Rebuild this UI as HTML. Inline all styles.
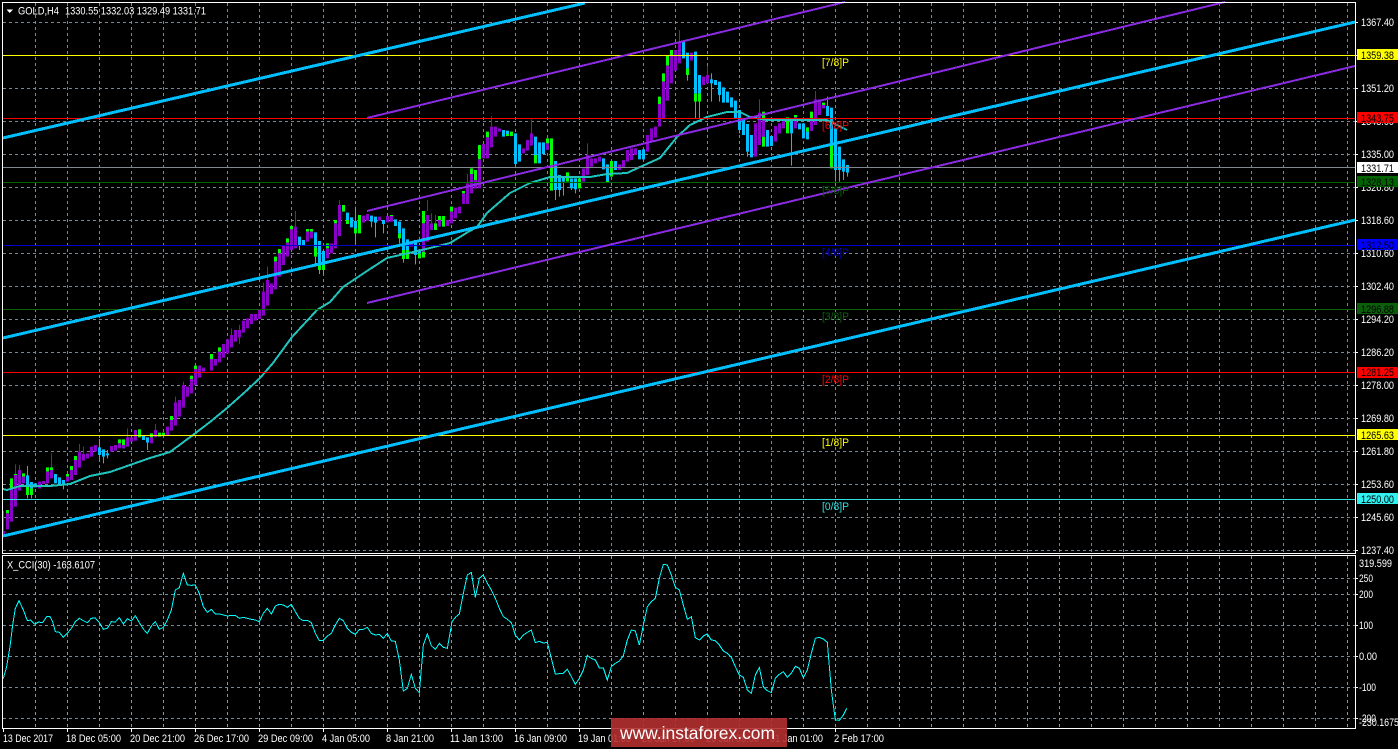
<!DOCTYPE html>
<html>
<head>
<meta charset="utf-8">
<title>GOLD,H4</title>
<style>
html,body{margin:0;padding:0;background:#000;width:1398px;height:749px;overflow:hidden}
svg{display:block}
text{font-family:"Liberation Sans",sans-serif;font-size:11px;fill:#fff}
.k{fill:#000}
</style>
</head>
<body>
<svg width="1398" height="749" viewBox="0 0 1398 749" xmlns="http://www.w3.org/2000/svg">
<rect width="1398" height="749" fill="#000"/>
<g shape-rendering="crispEdges">
<!-- grid -->
<path fill="none" stroke="#778899" stroke-width="1" stroke-dasharray="3 3" d="M3 22.5H1355M3 55.5H1355M3 88.5H1355M3 121.5H1355M3 154.5H1355M3 187.5H1355M3 220.5H1355M3 253.5H1355M3 286.5H1355M3 319.5H1355M3 352.5H1355M3 385.5H1355M3 418.5H1355M3 451.5H1355M3 484.5H1355M3 517.5H1355M3 550.5H1355M3 578.5H1355M3 594.5H1355M3 625.5H1355M3 656.5H1355M3 687.5H1355M3 718.5H1355"/>
<path fill="none" stroke="#778899" stroke-width="1" stroke-dasharray="3 3" d="M35.5 3V553M67.5 3V553M99.5 3V553M131.5 3V553M163.5 3V553M195.5 3V553M227.5 3V553M259.5 3V553M291.5 3V553M323.5 3V553M355.5 3V553M387.5 3V553M419.5 3V553M451.5 3V553M483.5 3V553M515.5 3V553M547.5 3V553M579.5 3V553M611.5 3V553M643.5 3V553M675.5 3V553M707.5 3V553M739.5 3V553M771.5 3V553M803.5 3V553M835.5 3V553M867.5 3V553M899.5 3V553M931.5 3V553M963.5 3V553M995.5 3V553M1027.5 3V553M1059.5 3V553M1091.5 3V553M1123.5 3V553M1155.5 3V553M1187.5 3V553M1219.5 3V553M1251.5 3V553M1283.5 3V553M1315.5 3V553M1347.5 3V553"/>
<path fill="none" stroke="#8c96a0" stroke-width="1" stroke-dasharray="3 3" d="M35.5 556V728M67.5 556V728M99.5 556V728M131.5 556V728M163.5 556V728M195.5 556V728M227.5 556V728M259.5 556V728M291.5 556V728M323.5 556V728M355.5 556V728M387.5 556V728M419.5 556V728M451.5 556V728M483.5 556V728M515.5 556V728M547.5 556V728M579.5 556V728M611.5 556V728M643.5 556V728M675.5 556V728M707.5 556V728M739.5 556V728M771.5 556V728M803.5 556V728M835.5 556V728M867.5 556V728M899.5 556V728M931.5 556V728M963.5 556V728M995.5 556V728M1027.5 556V728M1059.5 556V728M1091.5 556V728M1123.5 556V728M1155.5 556V728M1187.5 556V728M1219.5 556V728M1251.5 556V728M1283.5 556V728M1315.5 556V728M1347.5 556V728"/>

<!-- candles part 1 -->
<g transform="translate(0 200) scale(.3333333333)" fill="none" shape-rendering="geometricPrecision">
<path stroke="#9400D3" stroke-width="3" d="M10.5 933V1005M46.5 793V825M58.5 795V810M154.5 760V810M238.5 732V755M250.5 740V762M382.5 685V712M466.5 672V690M526.5 590V607M550.5 545V555M694.5 385V405M718.5 375V432M790.5 248V275M802.5 200V240M886.5 33V80M1018.5 0V15M1282.5 0V33M1294.5 40V70M1306.5 45V70"/>
<path stroke="#00BFFF" stroke-width="3" d="M82.5 798V895M94.5 880V895M190.5 855V868M298.5 717V780M310.5 770V790M322.5 750V775M442.5 728V750M898.5 135V150M946.5 170V200M958.5 190V222M970.5 210V225M1066.5 20V132M1114.5 65V82M1126.5 68V112M1150.5 72V100M1198.5 115V130M1210.5 177V188M1246.5 165V193"/>
<path stroke="#00FF00" stroke-width="9" d="M22.5 930V940M34.5 835V868M46.5 822V825M70.5 820V830M82.5 860V885M94.5 865V885M142.5 802V815M154.5 802V810M202.5 822V830M214.5 798V810M226.5 768V780M358.5 718V730M370.5 718V745M418.5 688V712M454.5 700V712M478.5 698V710M490.5 698V708M514.5 648V660M574.5 527V537M586.5 497V507M634.5 462V477M658.5 442V455M826.5 170V185M838.5 147V160M862.5 115V128M874.5 78V88M922.5 87V95M934.5 87V95M946.5 143V170M958.5 190V210M970.5 195V210M982.5 130V145M1006.5 60V70M1030.5 15V35M1042.5 60V72M1066.5 85V100M1078.5 45V100M1174.5 45V48M1198.5 100V115M1210.5 150V177M1222.5 150V177M1258.5 160V175M1270.5 33V70M1270.5 155V173M1306.5 70V90M1318.5 48V60M1330.5 48V80"/>
<path stroke="#8A00C8" stroke-width="9" d="M10.5 993V1005M22.5 940V988M34.5 868V965M46.5 825V920M58.5 810V872M70.5 830V850M118.5 845V865M130.5 843V852M142.5 815V850M154.5 810V835M202.5 830V845M214.5 810V840M226.5 780V825M238.5 755V803M250.5 762V782M262.5 760V775M274.5 740V770M286.5 735V755M334.5 738V755M346.5 735V752M358.5 730V745M370.5 735V745M382.5 712V740M394.5 712V725M406.5 690V722M454.5 712V730M466.5 690V712M502.5 680V705M514.5 660V692M526.5 607V677M538.5 600V650M550.5 555V623M562.5 560V590M574.5 537V580M586.5 507V555M598.5 497V533M610.5 503V515M634.5 477V512M646.5 477V497M658.5 455V487M670.5 432V473M682.5 418V460M694.5 405V442M706.5 390V425M718.5 390V412M730.5 362V398M742.5 355V385M754.5 342V372M766.5 342V362M778.5 330V357M790.5 275V347M802.5 240V317M814.5 250V282M826.5 185V268M838.5 160V230M850.5 138V195M862.5 128V170M874.5 88V150M886.5 80V145M922.5 95V125M934.5 95V115M982.5 145V175M994.5 130V160M1006.5 70V145M1018.5 15V108M1090.5 47V68M1102.5 42V62M1138.5 50V62M1162.5 48V67M1174.5 48V65M1234.5 125V140M1270.5 70V155M1282.5 45V125M1294.5 70V90M1318.5 60V80M1342.5 60V78"/>
<path stroke="#00BFFF" stroke-width="9" d="M82.5 826V860M94.5 846V865M106.5 850V862M166.5 822V850M178.5 832V855M190.5 840V855M298.5 742V765M310.5 748V770M322.5 760V766M430.5 708V720M442.5 712V728M898.5 110V135M910.5 120V137M946.5 97V143M958.5 123V190M970.5 153V195M1042.5 38V60M1054.5 52V82M1066.5 63V85M1114.5 47V65M1126.5 50V68M1150.5 60V72M1186.5 58V78M1198.5 65V100M1210.5 85V150M1222.5 118V150M1246.5 120V165M1258.5 150V160"/>
</g>

<!-- candles part 2 -->
<g transform="translate(450 30) scale(.3333333333)" fill="none" shape-rendering="geometricPrecision">
<path stroke="#9400D3" stroke-width="3" d="M52.5 432V460M124.5 258V290M244.5 268V310M412.5 340V375M688.5 0V35M772.5 108V135M928.5 208V248M1096.5 183V208M640.5 130V155"/>
<path stroke="#00BFFF" stroke-width="3" d="M196.5 402V410M316.5 480V510M328.5 480V500M340.5 455V497M364.5 475V480M376.5 478V490M712.5 135V152M736.5 215V265M748.5 215V265M784.5 130V215M808.5 195V215M868.5 300V310M892.5 365V380M1024.5 310V407M1132.5 200V228M1156.5 420V455M1168.5 420V455M1180.5 425V450M1192.5 428V440"/>
<path stroke="#00FF00" stroke-width="9" d="M4.5 530V545M40.5 483V490M64.5 415V432M76.5 420V450M88.5 345V388M112.5 305V322M172.5 312V318M184.5 305V318M256.5 375V400M292.5 325V340M304.5 325V482M352.5 427V455M388.5 445V475M472.5 453V456M484.5 393V440M628.5 200V222M640.5 130V155M652.5 77V107M664.5 60V75M712.5 115V135M736.5 190V215M748.5 190V215M940.5 245V270M940.5 320V350M1012.5 262V310M1036.5 255V262M1072.5 292V305M1084.5 245V265M1120.5 218V225M1144.5 345V415"/>
<path stroke="#8A00C8" stroke-width="9" d="M4.5 545V580M16.5 533V565M28.5 530V550M40.5 490V522M52.5 460V522M64.5 432V490M76.5 450V476M88.5 388V475M100.5 342V385M112.5 322V385M124.5 290V352M136.5 290V320M148.5 295V305M220.5 355V370M232.5 330V362M244.5 310V347M292.5 340V360M400.5 415V455M412.5 375V435M424.5 385V410M436.5 385V400M448.5 380V395M508.5 403V420M520.5 390V412M532.5 360V395M544.5 355V390M556.5 355V375M592.5 315V365M604.5 295V335M616.5 290V323M628.5 222V290M640.5 155V265M652.5 107V212M664.5 75V160M676.5 60V122M688.5 35V100M724.5 68V92M760.5 140V165M772.5 135V160M916.5 280V380M928.5 248V345M940.5 270V320M976.5 288V335M988.5 280V310M1000.5 265V295M1036.5 262V295M1084.5 265V303M1096.5 208V285M1108.5 208V255M1120.5 225V235"/>
<path stroke="#00BFFF" stroke-width="9" d="M160.5 300V320M172.5 302V312M196.5 310V402M208.5 343V395M256.5 320V375M268.5 337V400M280.5 337V372M316.5 393V480M328.5 435V480M340.5 440V455M364.5 445V475M376.5 445V478M460.5 385V418M472.5 403V453M496.5 393V420M568.5 360V388M580.5 358V388M700.5 35V85M712.5 68V115M736.5 65V190M748.5 135V190M784.5 148V160M796.5 150V165M808.5 155V195M820.5 172V218M832.5 185V218M844.5 202V232M856.5 212V265M868.5 240V300M880.5 268V315M892.5 282V365M904.5 315V382M952.5 300V350M964.5 318V348M1024.5 265V310M1048.5 280V298M1060.5 280V325M1072.5 305V328M1132.5 228V258M1144.5 233V345M1156.5 295V420M1168.5 350V420M1180.5 388V425M1192.5 405V428"/>
</g>

<!-- moving average -->
<polyline fill="none" stroke="#20C4BC" stroke-width="2" points="3,489 7,490 20,486 35,486 50,486 70,484 75,482 90,476 110,472 130,465 150,458 170,452 193,435 210,422 227,408 245,392 260,378 273,363 292,337 305,323 317,310 330,302 343,287 355,279 367,271 387,258 413,252 430,248 450,243 468,232 477,227 487,213 510,193 530,183 550,177 590,177 607,174 627,173 640,167 660,158 677,137 690,125 707,117 727,112 740,112 750,117 767,120 827,120 847,130"/>

<!-- level lines -->
<path fill="none" stroke="#FFFF00" d="M3 55.5H1355M3 435.5H1355"/>
<path fill="none" stroke="#FF0000" d="M3 118.5H1355M3 372.5H1355"/>
<path fill="none" stroke="#7f8890" d="M3 167.5H1355"/>
<path fill="none" stroke="#006400" d="M3 182.5H1355"/>
<path fill="none" stroke="#0000CD" d="M3 245.5H1355"/>
<path fill="none" stroke="#0B5F0B" d="M3 309.5H1355"/>
<path fill="none" stroke="#30E0E0" d="M3 499.5H1355"/>

<!-- channels -->
<path fill="none" stroke="#8A2BE2" stroke-width="2" d="M367 118L845 2M367 211L1225 2M367 303L1355 66"/>
<path fill="none" stroke="#00BFFF" stroke-width="3" d="M3 138L585 3M3 338L1355 22M3 536L1355 220"/>
</g>

<!-- murray labels -->
<text x="822" y="66" textLength="27" lengthAdjust="spacingAndGlyphs" style="fill:#FFFF00">[7/8]P</text>
<text x="822" y="129" textLength="27" lengthAdjust="spacingAndGlyphs" style="fill:#FF0000">[6/8]P</text>
<text x="822" y="194" textLength="27" lengthAdjust="spacingAndGlyphs" style="fill:#006400">[5/8]P</text>
<text x="822" y="256" textLength="27" lengthAdjust="spacingAndGlyphs" style="fill:#0000CD">[4/8]P</text>
<text x="822" y="320" textLength="27" lengthAdjust="spacingAndGlyphs" style="fill:#0B5F0B">[3/8]P</text>
<text x="822" y="383" textLength="27" lengthAdjust="spacingAndGlyphs" style="fill:#FF0000">[2/8]P</text>
<text x="822" y="446" textLength="27" lengthAdjust="spacingAndGlyphs" style="fill:#FFFF00">[1/8]P</text>
<text x="822" y="510" textLength="27" lengthAdjust="spacingAndGlyphs" style="fill:#30E0E0">[0/8]P</text>

<!-- CCI -->
<g transform="translate(0 550) scale(.3333333333)">
<polyline fill="none" stroke="#00FFFF" stroke-width="3" shape-rendering="crispEdges" points="10,385 20,350 30,290 38,225 46,175 57,152 70,180 82,212 92,210 104,222 116,216 128,218 140,200 150,200 158,215 166,245 178,247 190,262 202,250 214,235 226,215 238,205 250,212 262,218 274,205 286,204 298,218 310,238 322,235 334,215 346,216 358,203 370,222 382,206 394,213 406,197 418,218 430,237 442,250 454,228 466,215 478,238 490,232 502,210 514,180 526,120 538,113 550,70 562,105 574,106 586,105 598,130 610,170 622,187 634,178 646,192 658,192 670,195 682,198 694,196 706,196 718,205 730,202 742,205 754,208 766,210 778,215 790,190 802,175 814,192 826,168 838,163 850,165 862,172 874,163 886,185 898,205 910,212 922,211 934,218 946,250 958,272 970,271 982,258 994,250 1006,225 1018,205 1030,212 1042,235 1054,247 1066,253 1078,239 1090,238 1102,232 1114,250 1126,255 1138,253 1150,265 1162,250 1174,273 1186,274 1198,330 1210,423 1222,415 1234,373 1246,415 1258,428 1270,285 1282,252 1294,287 1306,298 1318,280 1330,292 1342,295 1350,250 1356,215 1368,200 1378,192 1390,130 1402,75 1414,67 1426,142 1438,85 1450,75 1462,100 1474,120 1486,145 1498,175 1510,200 1522,208 1534,218 1546,255 1558,270 1570,255 1582,247 1594,240 1606,278 1618,274 1630,279 1642,277 1654,325 1666,372 1678,371 1690,370 1702,358 1714,380 1726,403 1738,385 1750,360 1762,316 1774,325 1786,330 1798,354 1810,354 1822,390 1834,350 1846,340 1858,333 1870,317 1882,270 1894,240 1906,243 1918,285 1930,225 1942,170 1954,155 1966,145 1978,85 1990,43 2002,45 2014,75 2026,112 2038,120 2050,165 2062,208 2074,200 2086,263 2098,270 2110,258 2122,252 2134,270 2146,272 2158,285 2170,303 2182,310 2194,322 2206,350 2218,375 2230,382 2242,420 2254,430 2266,375 2278,352 2290,410 2302,422 2314,428 2326,385 2338,373 2350,365 2362,382 2374,370 2386,349 2398,355 2410,383 2422,360 2434,310 2446,265 2458,262 2470,267 2482,277 2494,420 2506,510 2518,511 2530,495 2540,475"/>
</g>

<!-- frames and ticks -->
<g shape-rendering="crispEdges" fill="none" stroke="#fff" stroke-width="1">
<rect x="2.5" y="2.5" width="1353" height="551"/>
<rect x="2.5" y="555.5" width="1353" height="173"/>
<path d="M1355 22.5h3M1355 55.5h3M1355 88.5h3M1355 121.5h3M1355 154.5h3M1355 187.5h3M1355 220.5h3M1355 253.5h3M1355 286.5h3M1355 319.5h3M1355 352.5h3M1355 385.5h3M1355 418.5h3M1355 451.5h3M1355 484.5h3M1355 517.5h3M1355 550.5h3M1355 578.5h3M1355 594.5h3M1355 625.5h3M1355 656.5h3M1355 687.5h3M1355 718.5h3"/>
<path d="M3.5 728v4M67.5 728v4M131.5 728v4M195.5 728v4M259.5 728v4M323.5 728v4M387.5 728v4M451.5 728v4M515.5 728v4M579.5 728v4M643.5 728v4M707.5 728v4M771.5 728v4M835.5 728v4"/>
</g>

<!-- header -->
<path d="M6.5 9.5H13L9.7 13Z" fill="#fff"/>
<text x="18" y="14.5" textLength="41" lengthAdjust="spacingAndGlyphs">GOLD,H4</text>
<text x="65" y="14.5" textLength="141" lengthAdjust="spacingAndGlyphs">1330.55 1332.03 1329.49 1331.71</text>
<text x="7" y="568.5" textLength="88" lengthAdjust="spacingAndGlyphs">X_CCI(30) -163.6107</text>

<!-- price axis -->
<text x="1361" y="26" textLength="33" lengthAdjust="spacingAndGlyphs">1367.40</text>
<text x="1361" y="92" textLength="33" lengthAdjust="spacingAndGlyphs">1351.20</text>
<text x="1361" y="125" textLength="33" lengthAdjust="spacingAndGlyphs">1343.00</text>
<text x="1361" y="158" textLength="33" lengthAdjust="spacingAndGlyphs">1335.00</text>
<text x="1361" y="191" textLength="33" lengthAdjust="spacingAndGlyphs">1326.80</text>
<text x="1361" y="224" textLength="33" lengthAdjust="spacingAndGlyphs">1318.60</text>
<text x="1361" y="257" textLength="33" lengthAdjust="spacingAndGlyphs">1310.60</text>
<text x="1361" y="290" textLength="33" lengthAdjust="spacingAndGlyphs">1302.40</text>
<text x="1361" y="323" textLength="33" lengthAdjust="spacingAndGlyphs">1294.20</text>
<text x="1361" y="356" textLength="33" lengthAdjust="spacingAndGlyphs">1286.20</text>
<text x="1361" y="389" textLength="33" lengthAdjust="spacingAndGlyphs">1278.00</text>
<text x="1361" y="422" textLength="33" lengthAdjust="spacingAndGlyphs">1269.80</text>
<text x="1361" y="455" textLength="33" lengthAdjust="spacingAndGlyphs">1261.80</text>
<text x="1361" y="488" textLength="33" lengthAdjust="spacingAndGlyphs">1253.60</text>
<text x="1361" y="521" textLength="33" lengthAdjust="spacingAndGlyphs">1245.60</text>
<text x="1361" y="554" textLength="33" lengthAdjust="spacingAndGlyphs">1237.40</text>

<!-- price tags -->
<g shape-rendering="crispEdges">
<rect x="1357" y="49" width="41" height="11" fill="#FFFF00"/>
<rect x="1357" y="112" width="41" height="11" fill="#FF0000"/>
<rect x="1357" y="162" width="41" height="11" fill="#FFFFFF"/>
<rect x="1357" y="176" width="41" height="11" fill="#006400"/>
<rect x="1357" y="239" width="41" height="11" fill="#0000FF"/>
<rect x="1357" y="303" width="41" height="11" fill="#0B5F0B"/>
<rect x="1357" y="367" width="41" height="11" fill="#FF0000"/>
<rect x="1357" y="429" width="41" height="11" fill="#FFFF00"/>
<rect x="1357" y="493" width="41" height="11" fill="#30F0F0"/>
</g>
<text class="k" x="1361" y="59" textLength="33" lengthAdjust="spacingAndGlyphs">1359.38</text>
<text class="k" x="1361" y="122" textLength="33" lengthAdjust="spacingAndGlyphs">1343.75</text>
<text class="k" x="1361" y="172" textLength="33" lengthAdjust="spacingAndGlyphs">1331.71</text>
<text class="k" x="1361" y="186" textLength="33" lengthAdjust="spacingAndGlyphs">1328.13</text>
<text class="k" x="1361" y="249" textLength="33" lengthAdjust="spacingAndGlyphs">1312.50</text>
<text class="k" x="1361" y="313" textLength="33" lengthAdjust="spacingAndGlyphs">1296.88</text>
<text class="k" x="1361" y="376" textLength="33" lengthAdjust="spacingAndGlyphs">1281.25</text>
<text class="k" x="1361" y="439" textLength="33" lengthAdjust="spacingAndGlyphs">1265.63</text>
<text class="k" x="1361" y="503" textLength="33" lengthAdjust="spacingAndGlyphs">1250.00</text>

<!-- CCI axis -->
<text x="1359" y="567" textLength="33" lengthAdjust="spacingAndGlyphs">319.599</text>
<text x="1359" y="582" textLength="14" lengthAdjust="spacingAndGlyphs">250</text>
<text x="1359" y="598" textLength="14" lengthAdjust="spacingAndGlyphs">200</text>
<text x="1359" y="629" textLength="14" lengthAdjust="spacingAndGlyphs">100</text>
<text x="1359" y="660" textLength="18" lengthAdjust="spacingAndGlyphs">0.00</text>
<text x="1359" y="691" textLength="17" lengthAdjust="spacingAndGlyphs">-100</text>
<text x="1359" y="722" textLength="17" lengthAdjust="spacingAndGlyphs">-200</text>
<text x="1359" y="726" textLength="40" lengthAdjust="spacingAndGlyphs">-230.1675</text>

<!-- time axis -->
<text x="3" y="742" textLength="50" lengthAdjust="spacingAndGlyphs">13 Dec 2017</text>
<text x="66" y="742" textLength="55" lengthAdjust="spacingAndGlyphs">18 Dec 05:00</text>
<text x="130" y="742" textLength="55" lengthAdjust="spacingAndGlyphs">20 Dec 21:00</text>
<text x="194" y="742" textLength="55" lengthAdjust="spacingAndGlyphs">26 Dec 17:00</text>
<text x="258" y="742" textLength="55" lengthAdjust="spacingAndGlyphs">29 Dec 09:00</text>
<text x="322" y="742" textLength="48" lengthAdjust="spacingAndGlyphs">4 Jan 05:00</text>
<text x="386" y="742" textLength="48" lengthAdjust="spacingAndGlyphs">8 Jan 21:00</text>
<text x="450" y="742" textLength="53" lengthAdjust="spacingAndGlyphs">11 Jan 13:00</text>
<text x="514" y="742" textLength="53" lengthAdjust="spacingAndGlyphs">16 Jan 09:00</text>
<text x="578" y="742" textLength="53" lengthAdjust="spacingAndGlyphs">19 Jan 01:00</text>
<text x="642" y="742" textLength="53" lengthAdjust="spacingAndGlyphs">23 Jan 17:00</text>
<text x="706" y="742" textLength="53" lengthAdjust="spacingAndGlyphs">26 Jan 09:00</text>
<text x="770" y="742" textLength="53" lengthAdjust="spacingAndGlyphs">31 Jan 01:00</text>
<text x="834" y="742" textLength="50" lengthAdjust="spacingAndGlyphs">2 Feb 17:00</text>

<!-- watermark -->
<rect x="611" y="718" width="176" height="29" fill="#B23030" fill-opacity=".9" shape-rendering="crispEdges"/>
<text x="620" y="739" textLength="155" lengthAdjust="spacingAndGlyphs" style="font-size:17.5px">www.instaforex.com</text>
</svg>
</body>
</html>
